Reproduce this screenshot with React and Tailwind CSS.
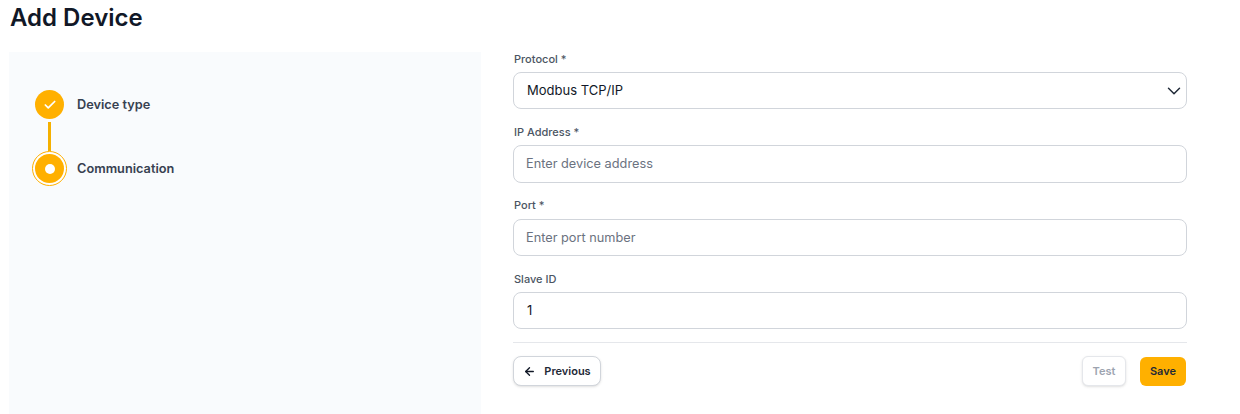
import React from "react";
import { ArrowLeft, Check, ChevronDown } from "lucide-react";

function Field({ label, value, placeholder, select, mb, box = "h-[37px]", labelGap = "mb-[5px]" }) {
  return (
    <div className={mb}>
      <div className={`text-[11px] leading-[16px] font-medium text-[#4b5563] pl-[1px] ${labelGap}`}>{label}</div>
      <div className={`${box} rounded-lg border border-[#d1d5db] bg-white flex items-center justify-between ${value ? "pl-[13px]" : "pl-[12px]"} pr-0`}>
        {value ? <span className="text-[13px] text-[#111827]">{value}</span> : <span className="text-[12.75px] text-[#6b7280]">{placeholder}</span>}
        {select && <ChevronDown size={22} strokeWidth={1.6} className="text-[#1f2937] mr-[1px]" />}
      </div>
    </div>
  );
}

export default function App() {
  return (
    <div className="w-[1240px] h-[414px] overflow-hidden bg-white font-['Inter',sans-serif]">
      <h1 className="text-[24px] leading-[32px] font-semibold text-[#111827] pl-[10px] pt-[2px] h-[52px]">Add Device</h1>
      <div className="flex h-[362px] pl-[9px]">
        <div className="w-[472px] bg-[#f9fbfd] shrink-0 pl-[26px] pt-[38px]">
          <div className="flex items-center gap-[13px]">
            <div className="w-[29px] h-[29px] rounded-full bg-[#ffb000] flex items-center justify-center">
              <Check size={14} strokeWidth={3} className="text-white" />
            </div>
            <span className="text-[12.75px] font-semibold text-[#374151]">Device type</span>
          </div>
          <div className="w-[3px] h-[29px] bg-[#f5b000] ml-[13px] my-[3px]"></div>
          <div className="flex items-center gap-[13px]">
            <div className="w-[29px] h-[29px] rounded-full bg-[#ffb000] flex items-center justify-center ring-2 ring-white outline outline-1 outline-offset-2 outline-[#ffb000]">
              <div className="w-[10px] h-[10px] rounded-full bg-white"></div>
            </div>
            <span className="text-[12.75px] font-semibold text-[#374151]">Communication</span>
          </div>
        </div>
        <div className="w-[674px] ml-[32px] -mt-[1px] shrink-0">
          <Field label="Protocol *" value="Modbus TCP/IP" select mb="mb-[15px]" />
          <Field label="IP Address *" placeholder="Enter device address" box="h-[38px]" mb="mb-[14px]" />
          <Field label="Port *" placeholder="Enter port number" labelGap="mb-[6px]" mb="mb-[15px]" />
          <Field label="Slave ID" value="1" mb="mb-[13px]" />
          <div className="border-t border-[#e5e7eb] pt-[13px] flex items-center justify-between">
            <button className="h-[30px] w-[88px] rounded-lg border border-[#d1d5db] bg-white shadow-sm flex items-center justify-center gap-[8px] text-[11px] font-semibold text-[#1f2937]">
              <ArrowLeft size={13} strokeWidth={2.5} className="text-[#111827]" />
              Previous
            </button>
            <div className="flex items-center gap-[14px] pr-[1px]">
              <button className="h-[30px] w-[44px] rounded-md border border-[#e5e7eb] bg-white shadow-sm text-[11px] font-semibold text-[#9ca3af]">Test</button>
              <button className="h-[29px] w-[46px] rounded-md bg-[#ffb000] text-[11px] font-semibold text-[#1f2937]">Save</button>
            </div>
          </div>
        </div>
      </div>
    </div>
  );
}
